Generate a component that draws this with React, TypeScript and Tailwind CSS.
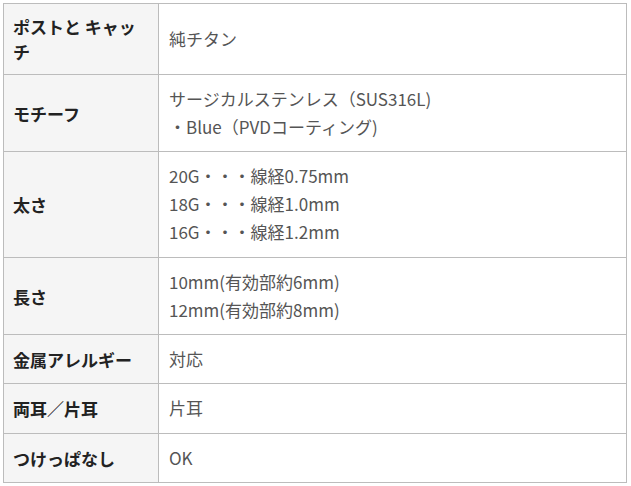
const rows: { label: string; values: string[]; tall?: boolean }[] = [
  { label: "ポストと キャッチ", values: ["純チタン"] },
  { label: "モチーフ", values: ["サージカルステンレス（SUS316L)", "・Blue（PVDコーティング)"] },
  {
    label: "太さ",
    values: ["20G・・・線経0.75mm", "18G・・・線経1.0mm", "16G・・・線経1.2mm"],
    tall: true,
  },
  { label: "長さ", values: ["10mm(有効部約6mm)", "12mm(有効部約8mm)"] },
  { label: "金属アレルギー", values: ["対応"] },
  { label: "両耳／片耳", values: ["片耳"], tall: true },
  { label: "つけっぱなし", values: ["OK"] },
];

export default function App() {
  return (
    <div className="bg-white w-[631px] h-[486px] pt-[3px] pl-[3px] font-['Noto_Sans_CJK_JP','Noto_Sans',sans-serif]">
      <table className="w-[624px] border-collapse table-fixed">
        <colgroup>
          <col className="w-[155px]" />
          <col />
        </colgroup>
        <tbody>
          {rows.map(row => (
            <tr key={row.label}>
              <th className="border border-[#bcbcbc] bg-[#f5f5f5] text-left align-middle pl-[9px] pr-4 py-[10px] text-[17px] leading-[25px] font-bold text-[#222]">
                {row.label}
              </th>
              <td
                className={
                  row.tall
                    ? "border border-[#bcbcbc] align-middle pl-[10px] pr-3 pt-[10px] pb-[11px] text-[17px] leading-[28px] text-[#555]"
                    : "border border-[#bcbcbc] align-middle pl-[10px] pr-3 py-[10px] text-[17px] leading-[28px] text-[#555]"
                }
              >
                {row.values.map(v => (
                  <div key={v} className="h-[28px]">
                    {v}
                  </div>
                ))}
              </td>
            </tr>
          ))}
        </tbody>
      </table>
    </div>
  );
}
